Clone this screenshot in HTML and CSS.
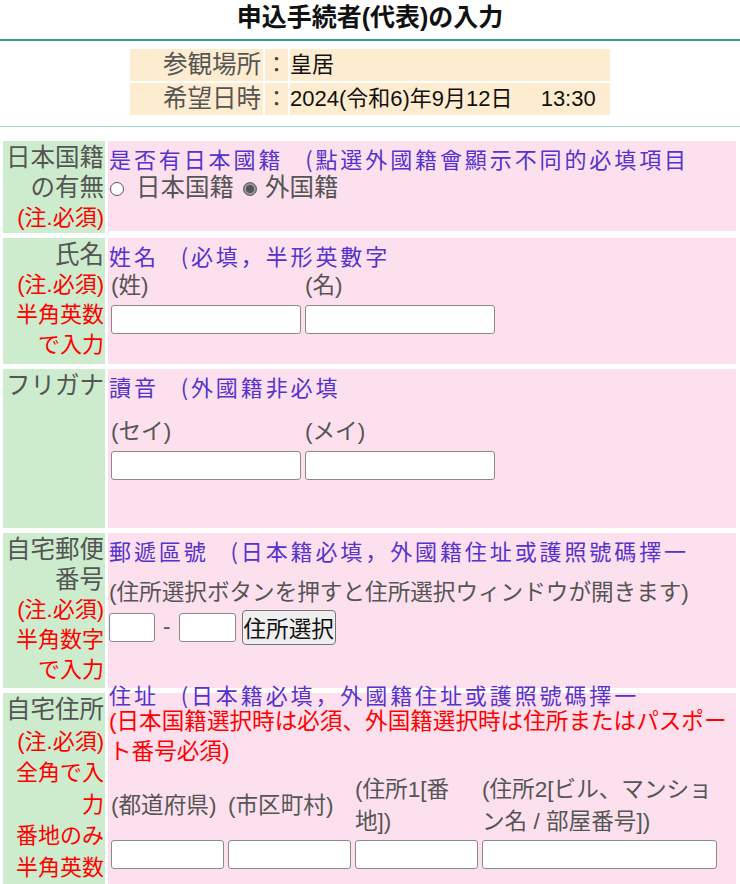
FILE: index.html
```html
<!DOCTYPE html>
<html lang="ja">
<head>
<meta charset="utf-8">
<title>申込手続者(代表)の入力</title>
<link rel="stylesheet" href="styles.css">
</head>
<body>
<h1 class="title">申込手続者(代表)の入力</h1>
<div class="info">
  <div class="info-grid">
    <div class="info-lab">参観場所</div><div class="info-colon">：</div><div class="info-val">皇居</div>
    <div class="info-lab">希望日時</div><div class="info-colon">：</div><div class="info-val">2024(令和6)年9月12日　 13:30</div>
  </div>
</div>
<form class="form">
  <div class="lab">日本国籍の有無<span class="req">(注.必須)</span></div>
  <div class="fld fld-nat">
    <div class="cn">是否有日本國籍 (點選外國籍會顯示不同的必填項目</div>
    <div class="radios">
      <input type="radio" class="radio r-jp" name="nat"><span>日本国籍</span>
      <input type="radio" class="radio r-fr" name="nat" checked><span>外国籍</span>
    </div>
  </div>

  <div class="lab">氏名<span class="req">(注.必須)</span><span class="req">半角英数で入力</span></div>
  <div class="fld fld-name">
    <div class="cn">姓名 (必填，半形英數字</div>
    <div class="pair">
      <div class="cap">(姓)</div><div class="cap">(名)</div>
      <input type="text" class="text"><input type="text" class="text">
    </div>
  </div>

  <div class="lab">フリガナ</div>
  <div class="fld fld-kana">
    <div class="cn">讀音 (外國籍非必填</div>
    <div class="pair pair-gap">
      <div class="cap">(セイ)</div><div class="cap">(メイ)</div>
      <input type="text" class="text"><input type="text" class="text">
    </div>
  </div>

  <div class="lab">自宅郵便番号<span class="req">(注.必須)</span><span class="req">半角数字で入力</span></div>
  <div class="fld fld-zip">
    <div class="cn">郵遞區號 (日本籍必填，外國籍住址或護照號碼擇一</div>
    <div class="note">(住所選択ボタンを押すと住所選択ウィンドウが開きます)</div>
    <div class="postal">
      <input type="text" class="text zip1"><span class="dash">-</span><input type="text" class="text zip2">
      <button type="button" class="btn">住所選択</button>
    </div>
  </div>

  <div class="lab lab-addr">自宅住所<span class="req">(注.必須)</span><span class="req">全角で入力</span><span class="req">番地のみ半角英数</span></div>
  <div class="fld fld-addr">
    <div class="cn cn-up">住址 (日本籍必填，外國籍住址或護照號碼擇一</div>
    <div class="warn">(日本国籍選択時は必須、外国籍選択時は住所またはパスポート番号必須)</div>
    <div class="addr-grid">
      <div class="cap">(都道府県)</div><div class="cap">(市区町村)</div><div class="cap">(住所1[番地])</div><div class="cap">(住所2[ビル、マンション名 / 部屋番号])</div>
      <input type="text" class="text"><input type="text" class="text"><input type="text" class="text"><input type="text" class="text">
    </div>
  </div>
</form>
</body>
</html>
```

FILE: styles.css
```css
body {
  margin: 0;
  background: #fff;
  color: #555;
  font-family: "Liberation Sans", "Noto Sans CJK JP", sans-serif;
}

.title {
  margin: 0;
  text-align: center;
  font-size: 25px;
  font-weight: bold;
  color: #111;
  line-height: 34px;
  padding-bottom: 5px;
  border-bottom: 2px solid #3a9a9a;
}

.info {
  padding: 8px 0 11px;
  border-bottom: 1px solid #a6d2d0;
}

.info-grid {
  width: 480px;
  margin: 0 auto;
  display: grid;
  grid-template-columns: 133px 23px 320px;
  gap: 2px;
}

.info-grid > div {
  background: #feecd0;
  height: 32px;
  line-height: 32px;
  white-space: pre;
}

.info-lab {
  text-align: right;
  font-size: 24.5px;
  color: #555;
  padding-right: 2px;
}

.info-colon {
  text-align: center;
  font-size: 22px;
  color: #444;
}

.info-val {
  font-size: 22px;
  color: #111;
  padding-left: 0;
}

.form {
  display: grid;
  grid-template-columns: 102px 628px;
  column-gap: 3px;
  row-gap: 5px;
  margin: 14px 4px 0 3px;
}

.lab {
  background: #cdeccd;
  text-align: right;
  font-size: 24.5px;
  line-height: 30px;
  padding: 2px 1px 0 0;
  color: #555;
}

.lab-addr {
  line-height: 31.6px;
  padding-top: 1px;
}

.req {
  display: block;
  color: #f00;
  font-size: 22px;
}

.fld {
  box-sizing: border-box;
  background: #fde0ee;
  padding: 2px 2px 0 1px;
  font-size: 22.6px;
  line-height: 30px;
  color: #555;
}

.fld-nat { height: 90px; }
.fld-name { height: 126px; }
.fld-kana { height: 159px; }
.fld-zip { height: 155px; }
.fld-addr { height: 200px; }

.cn {
  color: #5533cc;
  font-family: "Noto Sans CJK TC", sans-serif;
  font-size: 22px;
  letter-spacing: 2.9px;
  word-spacing: 14px;
  line-height: 30px;
  white-space: nowrap;
}

.cn-up {
  margin-top: -16px;
}

.radios {
  display: flex;
  align-items: center;
  font-size: 24.5px;
  height: 30px;
}

.radio {
  appearance: none;
  -webkit-appearance: none;
  box-sizing: border-box;
  width: 14px;
  height: 14px;
  border-radius: 50%;
  border: 1px solid #555;
  background: #fff;
  margin: 2px 12px 0 1px;
}

.radio:checked {
  background: #555;
  box-shadow: inset 0 0 0 2px #9a9a9a;
  border-color: #666;
}

.r-fr {
  margin-left: 9px;
  margin-right: 8px;
}

.pair {
  display: grid;
  grid-template-columns: 190px 190px;
  column-gap: 4px;
  margin-left: 2px;
}

.pair-gap {
  margin-top: 15px;
}

.cap {
  line-height: 32px;
}

.text {
  box-sizing: border-box;
  width: 100%;
  height: 29px;
  margin: 3px 0 0;
  padding: 0 4px;
  border: 1px solid #8a8a8a;
  border-radius: 3px;
  background: #fff;
}

.note {
  margin-top: 13px;
  white-space: nowrap;
}

.postal {
  display: flex;
  align-items: center;
  height: 36px;
  margin-top: 1px;
}

.postal .text {
  height: 29px;
  margin: 0;
}

.zip1 { width: 46px; }
.zip2 { width: 57px; }

.dash {
  margin: 0 8px;
  color: #555;
}

.btn {
  box-sizing: border-box;
  height: 35px;
  margin-left: 6px;
  padding: 0 1px;
  white-space: nowrap;
  font-family: "Liberation Sans", "Noto Sans CJK JP", sans-serif;
  font-size: 22.6px;
  color: #111;
  background: #efefef;
  border: 1px solid #767676;
  border-radius: 4px;
}

.warn {
  color: #f00;
  margin-top: -2px;
  width: 620px;
}

.addr-grid {
  display: grid;
  grid-template-columns: 113px 123px 123px 235px;
  column-gap: 4px;
  align-items: center;
  margin: 7px 0 0 2px;
}

.addr-grid .text {
  height: 29px;
  margin-top: 2px;
}
```
